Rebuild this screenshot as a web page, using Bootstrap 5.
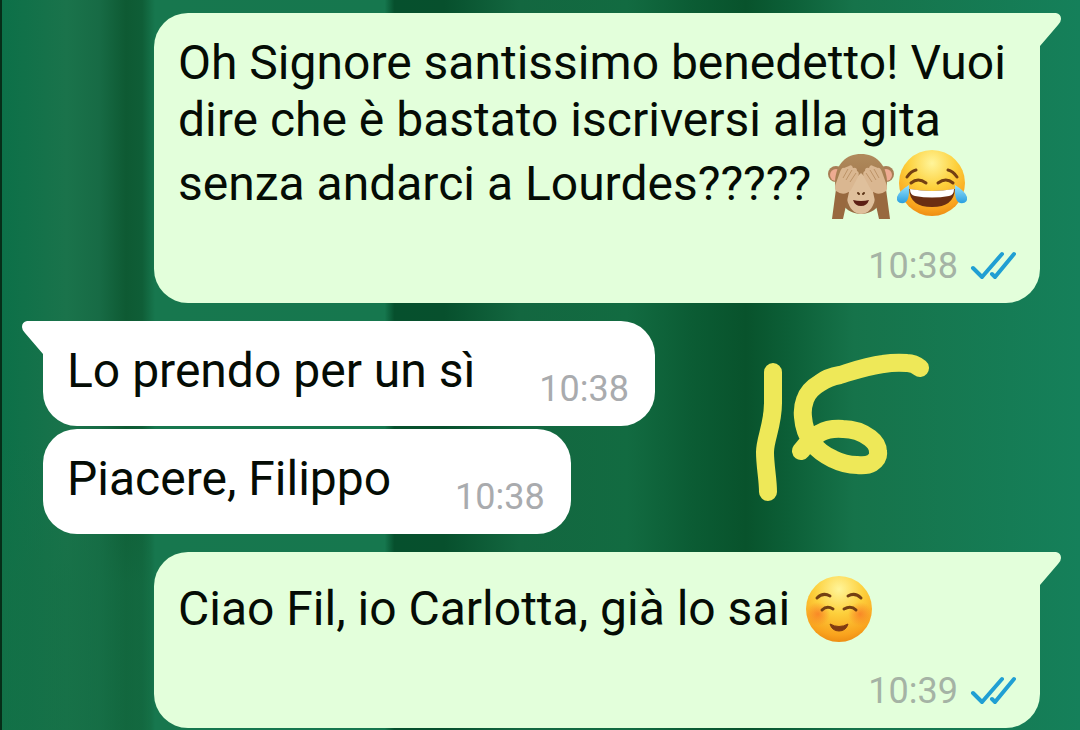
<!DOCTYPE html>
<html lang="it">
<head>
<meta charset="utf-8">
<meta name="viewport" content="width=device-width, initial-scale=1">
<title>Chat</title>
<link href="https://cdn.jsdelivr.net/npm/bootstrap@5.3.0/dist/css/bootstrap.min.css" rel="stylesheet">
<style>
  body { font-family: Roboto, "Liberation Sans", sans-serif; color: #050c05; }
  .chat {
    min-height: 100vh;
    padding: 13px 40px 3px 41px;
    border-left: 2px solid #062d18;
    margin: 0;
    background:
      linear-gradient(180deg, transparent 60%, rgba(21,112,70,.6) 80%) 0 0 / 13.8% 100% no-repeat,
      linear-gradient(90deg, #0c7048 0, #1a734b 6%, #176b45 9%, #0e5a33 11.5%, #0f5e37 13%, #17774e 14.2%, #16774e 35.5%, #06502d 36.4%, #07502d 41%, #136740 48%, #126b41 58%, #0b5c34 64%, #08532c 69%, #0c5f37 73%, #16734a 79%, #15805a 100%);
  }
  .bubble { position: relative; padding: 21px 24px 17px; border-radius: 34px; font-size: 48px; line-height: 57px; }
  .bubble-out { background: #e3ffdb; margin-left: 111px; }
  .bubble-in { background: #fff; align-self: flex-start; padding-right: 26px; }
  .bubble-in .msg { padding-bottom: 10px; }
  .tail-out { border-top-right-radius: 0; }
  .tail-in { border-top-left-radius: 0; }
  .tail { position: absolute; top: 0; width: 22px; height: 34px; }
  .tail-out .tail { left: 100%; margin-left: -1px; fill: #e3ffdb; }
  .tail-in .tail { right: 100%; margin-right: -1px; fill: #fff; }
  .msg { margin: 0; }
  .stamp { font-size: 36px; line-height: 40px; color: #a5b3a5; }
  .bubble-in .stamp { color: #a9abae; }
  .stamp-row { margin-top: 27px; gap: 12px; }
  .ticks { width: 46px; height: 30px; }
  .emoji { width: 68px; height: 68px; vertical-align: -19px; margin: 3px 0 0 3px; overflow: visible; }
  .gap-msg { margin-top: 18px; }
  .gap-same { margin-top: 3px; }
  .gap-time { gap: 64px; }
  .scribble { position: absolute; left: 100%; top: 30px; margin-left: 98px; width: 180px; height: 150px; }
</style>
</head>
<body>
<svg class="position-absolute" width="0" height="0" aria-hidden="true">
  <defs>
    <radialGradient id="face" cx=".5" cy=".2" r=".82"><stop offset="0" stop-color="#fff59a"/><stop offset=".45" stop-color="#fdd03c"/><stop offset=".85" stop-color="#f9a21d"/><stop offset="1" stop-color="#ec8a12"/></radialGradient>
    <radialGradient id="blush"><stop offset="0" stop-color="#f86b22" stop-opacity=".65"/><stop offset="1" stop-color="#f86b22" stop-opacity="0"/></radialGradient>
    <linearGradient id="fur" x2="0" y2="1"><stop offset="0" stop-color="#b08a5c"/><stop offset="1" stop-color="#94683f"/></linearGradient>
    <linearGradient id="tear" x2="0" y2="1"><stop offset="0" stop-color="#9be4fb"/><stop offset="1" stop-color="#2a9fe0"/></linearGradient>
  </defs>
</svg>
<main class="chat d-flex flex-column">
  <article class="bubble bubble-out tail-out">
    <svg class="tail" viewBox="0 0 22 34"><path d="M0 0H17Q22 1 22 6Q22 9 19 12L1 33H0Z"/></svg>
    <p class="msg">Oh Signore santissimo benedetto! Vuoi dire che è bastato iscriversi alla gita senza andarci a Lourdes????? <svg class="emoji" viewBox="0 0 68 68" role="img" aria-label="Scimmia che non vede">
      <circle cx="10" cy="23" r="8" fill="#a87e55"/><circle cx="60" cy="23" r="8" fill="#a87e55"/><circle cx="10" cy="24" r="6" fill="#eeab92"/><circle cx="60" cy="24" r="6" fill="#eeab92"/>
      <path d="M35 3C20 3 10 13 9 30C9 49 20 63 35 63S61 49 61 30C60 13 50 3 35 3Z" fill="url(#fur)"/>
      <path d="M35 22C26 31 20 38 21 48C23 58 29 63 35 63S47 58 49 48C50 38 44 31 35 22Z" fill="#dfc09c"/>
      <path d="M6 68L10 38Q18 34 23 41L17 68ZM64 68L60 38Q52 34 47 41L53 68Z" fill="#98693f"/>
      <path d="M10 40Q8 37 10 32L14 21Q16 16 18 17L23 15Q26 13 27 17Q31 16 31 20Q34 21 32 26L25 39Q18 46 10 40Z" fill="#dab791"/>
      <path d="M60 40Q62 37 60 32L56 21Q54 16 52 17L47 15Q44 13 43 17Q39 16 39 20Q36 21 38 26L45 39Q52 46 60 40Z" fill="#dab791"/>
      <path d="M17 27L22 18M20 29L26 19M24 31L30 22M53 27L48 18M50 29L44 19M46 31L40 22" fill="none" stroke="#bd9468" stroke-width="1"/>
      <path d="M32 42L33 43M38 42L37 43" stroke="#5b3417" stroke-width="2" stroke-linecap="round"/>
      <path d="M27 49Q35 51 43 49Q41 55 35 55T27 49Z" fill="#5c1f14"/>
    </svg><svg class="emoji" viewBox="0 0 68 68" role="img" aria-label="Faccina con lacrime di gioia">
      <circle cx="35" cy="32" r="33" fill="url(#face)"/>
      <path d="M10 26Q14 20 19 19M60 26Q56 20 51 19M14 32Q21 26 29 32M41 32Q49 26 56 32" fill="none" stroke="#744012" stroke-width="3" stroke-linecap="round"/>
      <path d="M12 38Q35 42 58 38Q57 56 35 56T12 38Z" fill="#6b2e12"/><path d="M13 38Q35 42 57 38Q57 44 52 45Q35 48 18 45Q13 44 13 38Z" fill="#fff"/>
      <path d="M12 34Q13 50 7 52Q-1 53 0 46Q2 40 12 34ZM58 34Q57 50 63 52Q71 53 70 46Q68 40 58 34Z" fill="url(#tear)"/>
    </svg></p>
    <div class="stamp-row d-flex justify-content-end align-items-center">
      <time class="stamp">10:38</time>
      <svg class="ticks" viewBox="0 0 46 30" role="img" aria-label="Letto" fill="none" stroke="#209fd3" stroke-width="4" stroke-linecap="round" stroke-linejoin="round"><path d="M3 17L12 26L32 3M22 23L25 26L44 3"/></svg>
    </div>
  </article>

  <article class="bubble bubble-in tail-in gap-msg d-flex align-items-end gap-time">
    <svg class="tail" viewBox="0 0 22 34"><path d="M22 0H5Q0 1 0 6Q0 9 3 12L21 33H22Z"/></svg>
    <p class="msg">Lo prendo per un sì</p>
    <time class="stamp">10:38</time>
    <svg class="scribble" viewBox="0 0 180 150" role="img" aria-label="16" fill="none" stroke="#eee858" stroke-width="18" stroke-linecap="round" stroke-linejoin="round"><path d="M20 21V52C20 74 12 88 12 101C12 115 15 128 15 141M167 17Q161 12 154 12Q142 11 130 13C114 15 100 20 87 24Q75 26 67 32Q55 39 52 49Q49 57 50 66Q51 80 59 92Q67 102 80 108Q92 114 104 114Q114 115 119 112Q126 107 125 101Q125 93 117 87Q105 78 90 78Q76 77 67 82Q57 88 48 100"/></svg>
  </article>

  <article class="bubble bubble-in gap-same d-flex align-items-end gap-time">
    <p class="msg">Piacere, Filippo</p>
    <time class="stamp">10:38</time>
  </article>

  <article class="bubble bubble-out tail-out gap-msg">
    <svg class="tail" viewBox="0 0 22 34"><path d="M0 0H17Q22 1 22 6Q22 9 19 12L1 33H0Z"/></svg>
    <p class="msg">Ciao Fil, io Carlotta, già lo sai <svg class="emoji" viewBox="0 0 68 68" role="img" aria-label="Faccina sorridente">
      <circle cx="34" cy="33" r="33" fill="url(#face)"/><circle cx="13" cy="38" r="12" fill="url(#blush)"/><circle cx="55" cy="38" r="12" fill="url(#blush)"/>
      <path d="M12 22Q18 16 25 20M43 20Q50 16 56 22M17 34Q22 29 28 33M39 33Q46 29 51 34" fill="none" stroke="#744012" stroke-width="3" stroke-linecap="round"/>
      <path d="M25 48Q34 53 43 48Q41 55 34 55T25 48Z" fill="#803a12" stroke="#803a12" stroke-linejoin="round"/>
    </svg></p>
    <div class="stamp-row d-flex justify-content-end align-items-center">
      <time class="stamp">10:39</time>
      <svg class="ticks" viewBox="0 0 46 30" role="img" aria-label="Letto" fill="none" stroke="#209fd3" stroke-width="4" stroke-linecap="round" stroke-linejoin="round"><path d="M3 17L12 26L32 3M22 23L25 26L44 3"/></svg>
    </div>
  </article>
</main>
<script src="https://cdn.jsdelivr.net/npm/bootstrap@5.3.0/dist/js/bootstrap.bundle.min.js"></script>
</body>
</html>
